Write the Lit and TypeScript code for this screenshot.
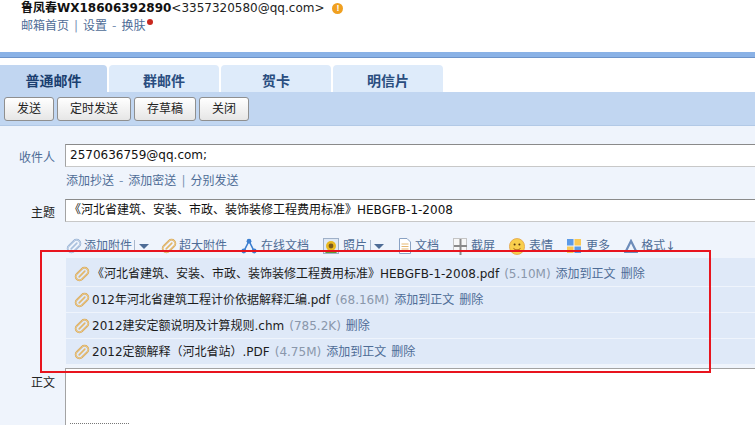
import { LitElement, html, css, svg } from "lit";
import { customElement } from "lit/decorators.js";

const clip = (stroke: string, hi: string, inner: string) => svg`<svg class="clip" width="16" height="16" viewBox="0 0 16 16" fill="none">
  <g transform="rotate(-45 8 8)">
    <rect x="0.6" y="4.2" width="14.8" height="7.6" rx="3.8" stroke="${stroke}" stroke-width="1.8"/>
    <rect x="0.6" y="4.2" width="14.8" height="7.6" rx="3.8" stroke="${hi}" stroke-width="0.6"/>
    <path d="M4 8 H12" stroke="${inner}" stroke-width="1.6" stroke-linecap="round"/>
  </g>
</svg>`;
const gold = () => clip("#d6a24f", "#f6e0a6", "#e3b768");
const steel = () => clip("#8fabd0", "#dfe9f6", "#a9c0de");

const caret = html`<span class="sep"></span><span class="caret"></span>`;

const attachments = [
  { name: "《河北省建筑、安装、市政、装饰装修工程费用标准》HEBGFB-1-2008.pdf", size: "(5.10M)", add: true },
  { name: "012年河北省建筑工程计价依据解释汇编.pdf", size: "(68.16M)", add: true },
  { name: "2012建安定额说明及计算规则.chm", size: "(785.2K)", add: false },
  { name: "2012定额解释（河北省站）.PDF", size: "(4.75M)", add: true },
];

@customElement("app-root")
export class AppRoot extends LitElement {
  static styles = css`
    :host {
      display: block;
      position: relative;
      width: 755px;
      height: 425px;
      overflow: hidden;
      background: #eff4fc;
      font: 12px/16px "DejaVu Sans", "Noto Sans CJK SC", sans-serif;
      color: #1a1a1a;
    }
    a { color: #4e6c96; }
    .head { background: #fff; height: 52px; padding: 0 0 0 21px; box-sizing: border-box; }
    .who { display: flex; align-items: center; height: 16px; white-space: nowrap; color: #222; }
    .who b { font-weight: 700; color: #111; }
    .warn {
      width: 11px; height: 11px; border-radius: 50%; background: #f0a020; color: #fff;
      font: 700 9px/11px "Liberation Sans", sans-serif; text-align: center; margin-left: 8px;
    }
    .nav { display: flex; height: 18px; margin-top: 1px; align-items: center; color: #4e6c96; position: relative; width: max-content; }
    .nav span { margin: 0 5px; color: #7d94b5; }
    .dot { position: absolute; right: -8px; top: 2px; width: 6px; height: 6px; border-radius: 50%; background: #c8281e; }
    .band { height: 5px; background: #8ab2e6; border-bottom: 1px solid #6d93c9; }
    .tabs { height: 27px; background: #fff; display: flex; gap: 2px; padding-top: 7px; }
    .tab {
      width: 110px; height: 27px; background: #deebfa; border-radius: 4px 4px 0 0; color: #2a4e80;
      font-weight: 700; font-size: 14px; line-height: 33px; text-align: center;
    }
    .tab.on { width: 107px; background: #c1d6f1; color: #1b3f70; border-radius: 0 4px 0 0; }
    .bar { height: 34px; box-sizing: border-box; background: #c1d6f1; border-bottom: 1px solid #b2c9e6; display: flex; gap: 3px; padding: 5px 0 0 4px; }
    .bar button {
      height: 24px; box-sizing: border-box; padding: 0; border: 1px solid #8f8f8f; border-radius: 3px;
      background: linear-gradient(#fff, #e6e6e6); font: inherit; color: #222;
    }
    .b50 { width: 50px; }
    .b74 { width: 74px; }
    .b62 { width: 62px; }
    .row { display: flex; }
    .label { width: 55px; text-align: right; flex: none; color: #222; }
    .label.soft { color: #4e6c96; }
    .field {
      margin-left: 10px; flex: 1; height: 23px; box-sizing: border-box; background: #fff;
      border: 1px solid #a3a3a3; border-right: none; border-bottom-color: #c8c8c8; border-top-color: #8a8a8a;
      white-space: nowrap; overflow: hidden; line-height: 20px; color: #111;
    }
    .to { margin-top: 18px; }
    .to .label { padding-top: 6px; }
    .to .field { padding-left: 4px; }
    .links { margin: 6px 0 0 66px; height: 16px; display: flex; color: #4e6c96; }
    .links span { margin: 0 5px; color: #7d94b5; }
    .subject { margin-top: 10px; }
    .subject .label { padding-top: 6px; }
    .subject .field { padding-left: 3px; }
    .tools { display: flex; align-items: center; height: 18px; margin: 15px 0 0 66px; color: #4e6c96; white-space: nowrap; }
    .tool { display: flex; align-items: center; gap: 4px; margin-right: 14px; }
    .tool svg { flex: none; margin-right: 0; }
    .tool.g2 { gap: 2px; }
    .tool.g3 { gap: 3px; }
    .tool.g5 { gap: 5px; }
    .tool.first { margin-right: 12px; }
    .sep { width: 1px; height: 12px; background: #a9b8cd; margin-left: -1px; }
    .caret { width: 0; height: 0; border: 5px solid transparent; border-top: 5px solid #4e6c96; border-bottom: 0; margin-left: -1px; }
    .first .sep { margin-left: 0; }
    .first .caret { margin-left: 2px; }
    .files { margin: 3px 0 0 66px; display: flex; flex-direction: column; gap: 1px; white-space: nowrap; }
    .file { height: 25px; box-sizing: border-box; padding: 0 0 0 8px; background: #dfe9f8; display: flex; align-items: center; color: #1c1c1c; }
    .file:first-child { height: 28px; padding-top: 3px; }
    .clip { flex: none; margin-right: 2px; }
    .size { color: #8a97ab; margin: 0 5px; }
    .file a { margin-right: 5px; }
    .bodyrow { margin-top: 4px; }
    .bodyrow .label { padding-top: 7px; }
    .body { margin-left: 10px; flex: 1; height: 80px; background: #fff; border: 1px solid #a3a3a3; border-right: none; box-sizing: border-box; padding: 54px 0 0 4px; }
    .rule { width: 59px; border-top: 1px dotted #777; }
    .mark { position: absolute; left: 40px; top: 250px; width: 671px; height: 123px; box-sizing: border-box; border: 2px solid #e8141e; pointer-events: none; }
  `;

  render() {
    return html`
      <div class="head">
        <div class="who"><b>鲁凤春WX18606392890</b><span>&lt;3357320580@qq.com&gt;</span><span class="warn">!</span></div>
        <div class="nav">邮箱首页<span>|</span>设置<span>-</span>换肤<i class="dot"></i></div>
      </div>
      <div class="band"></div>
      <div class="tabs">
        <div class="tab on">普通邮件</div><div class="tab">群邮件</div><div class="tab">贺卡</div><div class="tab">明信片</div>
      </div>
      <div class="bar">
        <button class="b50">发送</button><button class="b74">定时发送</button><button class="b62">存草稿</button><button class="b50">关闭</button>
      </div>
      <div class="row to"><div class="label soft">收件人</div><div class="field">2570636759@qq.com;</div></div>
      <div class="links">添加抄送<span>-</span>添加密送<span>|</span>分别发送</div>
      <div class="row subject"><div class="label">主题</div><div class="field">《河北省建筑、安装、市政、装饰装修工程费用标准》HEBGFB-1-2008</div></div>
      <div class="tools">
        <div class="tool g2 first">${steel()}添加附件${caret}</div>
        <div class="tool g2">${gold()}超大附件</div>
        <div class="tool"><svg width="16" height="16" viewBox="0 0 16 16" fill="none"><path d="M8 3 L3 13 H13 Z" stroke="#3d7fd0" stroke-width="1.6"/><circle cx="8" cy="3.2" r="2.4" fill="#3d7fd0"/><circle cx="2.8" cy="13" r="2.4" fill="#3d7fd0"/><circle cx="13.2" cy="13" r="2.4" fill="#3d7fd0"/></svg>在线文档</div>
        <div class="tool"><svg width="16" height="16" viewBox="0 0 16 16"><rect x=".5" y=".5" width="15" height="15" fill="#dfe8f4" stroke="#9fb0c8"/><circle cx="8" cy="8" r="5" fill="#e8b820"/><circle cx="8" cy="8" r="2.4" fill="#7a5a1c"/><path d="M2 15 Q5 10 8 13 Q11 10 14 15 Z" fill="#5f9a3a"/></svg>照片${caret}</div>
        <div class="tool g3"><svg width="14" height="16" viewBox="0 0 14 16" fill="none"><path d="M1.5 .5 H9 L12.5 4 V15.5 H1.5 Z" fill="#fff" stroke="#8aa2c4"/><path d="M3.5 6 H10.5 M3.5 8.5 H10.5 M3.5 11 H10.5" stroke="#e6b871"/></svg>文档</div>
        <div class="tool"><svg width="14" height="17" viewBox="0 0 14 17" fill="none"><rect x=".5" y=".5" width="13" height="12" fill="#f7f7f7" stroke="#c4c4c4"/><path d="M7.5 1 V17 M1 8 H14" stroke="#8a8a8a" stroke-width="2"/></svg>截屏</div>
        <div class="tool"><svg width="16" height="17" viewBox="0 0 16 17"><ellipse cx="8" cy="8.5" rx="7.6" ry="8" fill="#f8cf4c" stroke="#e5a347" stroke-width=".8"/><circle cx="5.6" cy="6.4" r="1" fill="#5a3a10"/><circle cx="10.4" cy="6.4" r="1" fill="#5a3a10"/><path d="M4.5 10.4 Q8 13.6 11.5 10.4" fill="none" stroke="#a05a16" stroke-width="1"/></svg>表情</div>
        <div class="tool g5"><svg width="14" height="14" viewBox="0 0 14 14"><rect width="6.5" height="6.5" fill="#5c9ae6"/><rect x="7.5" width="6.5" height="6.5" fill="#f8c957"/><rect y="7.5" width="6.5" height="6.5" fill="#f8c957"/><rect x="7.5" y="7.5" width="6.5" height="6.5" fill="#5c9ae6"/></svg>更多</div>
        <div class="tool g3"><svg width="14" height="14" viewBox="0 0 14 14" fill="none"><path d="M1.5 13 L7 2 L12.5 13 Z" stroke="#6d8cba" stroke-width="2.2"/></svg>格式↓</div>
      </div>
      <div class="files">
        ${attachments.map(f => html`<div class="file">${gold()}<span>${f.name}</span><span class="size">${f.size}</span>${f.add ? html`<a>添加到正文</a>` : ""}<a>删除</a></div>`)}
      </div>
      <div class="row bodyrow"><div class="label">正文</div><div class="body"><div class="rule"></div></div></div>
      <div class="mark"></div>
    `;
  }
}
